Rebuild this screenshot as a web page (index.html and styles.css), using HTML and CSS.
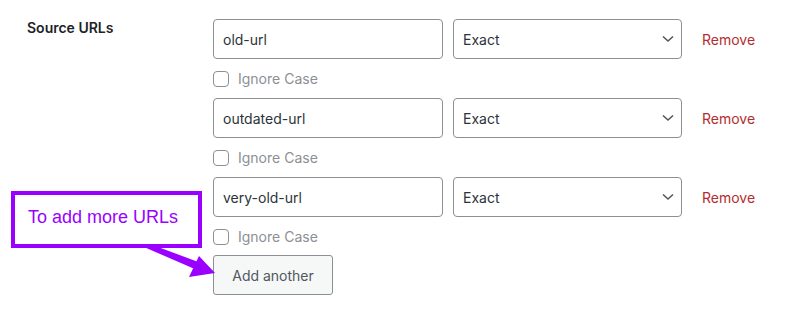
FILE: index.html
```html
<!DOCTYPE html>
<html lang="en">
<head>
<meta charset="UTF-8">
<title>Source URLs</title>
<link rel="stylesheet" href="styles.css">
</head>

<body>

<div class="form-row">

    <!-- LABEL -->
    <div class="row-label">Source URLs</div>

    <!-- FIELDS -->
    <div class="fields">

        <div class="url-item">
            <div class="url-line">
                <input class="url-input" type="text" value="old-url">
                <div class="select-wrap">
                    <select class="match-select"><option>Exact</option><option>Regex</option></select>
                    <svg class="chevron" width="12" height="8" viewBox="0 0 12 8"><path d="M1 1.5 L6 6 L11 1.5" fill="none" stroke="#50575e" stroke-width="1.6"/></svg>
                </div>
                <a class="remove-link" href="#">Remove</a>
            </div>
            <label class="case-line"><input class="check" type="checkbox"> Ignore Case</label>
        </div>

        <div class="url-item">
            <div class="url-line">
                <input class="url-input" type="text" value="outdated-url">
                <div class="select-wrap">
                    <select class="match-select"><option>Exact</option><option>Regex</option></select>
                    <svg class="chevron" width="12" height="8" viewBox="0 0 12 8"><path d="M1 1.5 L6 6 L11 1.5" fill="none" stroke="#50575e" stroke-width="1.6"/></svg>
                </div>
                <a class="remove-link" href="#">Remove</a>
            </div>
            <label class="case-line"><input class="check" type="checkbox"> Ignore Case</label>
        </div>

        <div class="url-item">
            <div class="url-line">
                <input class="url-input" type="text" value="very-old-url">
                <div class="select-wrap">
                    <select class="match-select"><option>Exact</option><option>Regex</option></select>
                    <svg class="chevron" width="12" height="8" viewBox="0 0 12 8"><path d="M1 1.5 L6 6 L11 1.5" fill="none" stroke="#50575e" stroke-width="1.6"/></svg>
                </div>
                <a class="remove-link" href="#">Remove</a>
            </div>
            <label class="case-line"><input class="check" type="checkbox"> Ignore Case</label>
        </div>

        <button class="add-btn" type="button">Add another</button>

    </div>

</div>

<!-- ANNOTATION -->
<div class="note">To add more URLs</div>
<svg class="note-arrow" width="801" height="311" viewBox="0 0 801 311">
    <polygon points="144,247 158,247 201,263 197,270" fill="#9900ff"/>
    <polygon points="199,256 215,273 189,277" fill="#9900ff"/>
</svg>

</body>
</html>
```

FILE: styles.css
```css
body {
    font-family: Inter, 'Noto Sans', sans-serif;
    margin: 0;
    background: #fff;
    color: #1d2327;
    font-size: 14px;
}

.form-row {
    display: flex;
    padding: 19px 0 0 27px;
}

/* LABEL */
.row-label {
    width: 186px;
    font-weight: 600;
    line-height: 20px;
    margin-top: -1px;
}

/* FIELDS */
.fields {
    display: flex;
    flex-direction: column;
}

.url-line {
    display: flex;
    align-items: center;
    height: 40px;
}

.url-input {
    box-sizing: border-box;
    width: 230px;
    height: 40px;
    margin: 0;
    padding: 0 9px;
    border: 1px solid #8c8f94;
    border-radius: 4px;
    font-family: inherit;
    font-size: 14px;
    color: #2c3338;
    outline: none;
}

.select-wrap {
    position: relative;
    margin-left: 10px;
}

.match-select {
    box-sizing: border-box;
    width: 229px;
    height: 40px;
    margin: 0;
    padding: 0 30px 0 9px;
    border: 1px solid #8c8f94;
    border-radius: 4px;
    background: #fff;
    font-family: inherit;
    font-size: 14px;
    color: #2c3338;
    appearance: none;
    -webkit-appearance: none;
}

.chevron {
    position: absolute;
    right: 8px;
    top: 16px;
    pointer-events: none;
}

.remove-link {
    margin-left: 20px;
    color: #b32d2e;
    text-decoration: none;
    font-size: 14px;
}

.case-line {
    display: flex;
    align-items: center;
    height: 39px;
    color: #8c8f94;
    font-size: 14px;
}

.check {
    appearance: none;
    -webkit-appearance: none;
    box-sizing: border-box;
    width: 16px;
    height: 16px;
    margin: 0 9px 0 0;
    border: 1px solid #8c8f94;
    border-radius: 4px;
    background: #fff;
}

.add-btn {
    box-sizing: border-box;
    width: 120px;
    height: 40px;
    margin: -1px 0 0 0;
    padding: 0;
    border: 1px solid #8c8f94;
    border-radius: 3px;
    background: #f6f7f7;
    color: #50575e;
    font-family: inherit;
    font-size: 14px;
}

/* ANNOTATION */
.note {
    position: absolute;
    left: 11px;
    top: 191px;
    box-sizing: border-box;
    width: 191px;
    height: 57px;
    padding: 11px 0 0 13px;
    border: 4px solid #9900ff;
    color: #9900ff;
    font-family: 'Liberation Sans', Arial, sans-serif;
    font-size: 18px;
    line-height: 22px;
}

.note-arrow {
    position: absolute;
    left: 0;
    top: 0;
    pointer-events: none;
}
```
